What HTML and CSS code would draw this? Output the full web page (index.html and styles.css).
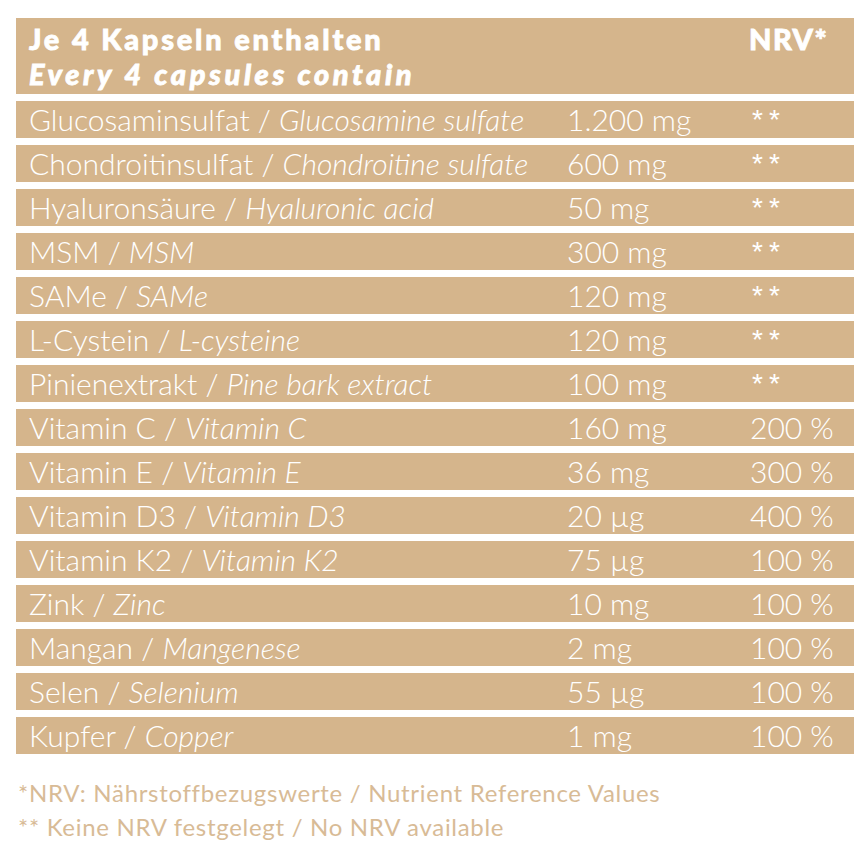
FILE: index.html
```html
<!DOCTYPE html>
<html lang="de">
<head>
<meta charset="utf-8">
<link rel="stylesheet" href="styles.css">
</head>
<body>
<div class="panel">
  <div class="table">
    <div class="head">
      <div class="head-left">
        <div class="h-de">Je 4 Kapseln enthalten</div>
        <div class="h-en">Every 4 capsules contain</div>
      </div>
      <div class="h-nrv">NRV*</div>
    </div>
    <div class="row"><span class="name">Glucosaminsulfat / <em>Glucosamine sulfate</em></span><span class="amt">1.200 mg</span><span class="nrv star">**</span></div>
    <div class="row"><span class="name">Chondroitinsulfat / <em>Chondroitine sulfate</em></span><span class="amt">600 mg</span><span class="nrv star">**</span></div>
    <div class="row"><span class="name">Hyaluronsäure / <em>Hyaluronic acid</em></span><span class="amt">50 mg</span><span class="nrv star">**</span></div>
    <div class="row"><span class="name">MSM / <em>MSM</em></span><span class="amt">300 mg</span><span class="nrv star">**</span></div>
    <div class="row"><span class="name">SAMe / <em>SAMe</em></span><span class="amt">120 mg</span><span class="nrv star">**</span></div>
    <div class="row"><span class="name">L-Cystein / <em>L-cysteine</em></span><span class="amt">120 mg</span><span class="nrv star">**</span></div>
    <div class="row"><span class="name">Pinienextrakt / <em>Pine bark extract</em></span><span class="amt">100 mg</span><span class="nrv star">**</span></div>
    <div class="row"><span class="name">Vitamin C / <em>Vitamin C</em></span><span class="amt">160 mg</span><span class="nrv">200 %</span></div>
    <div class="row"><span class="name">Vitamin E / <em>Vitamin E</em></span><span class="amt">36 mg</span><span class="nrv">300 %</span></div>
    <div class="row"><span class="name">Vitamin D3 / <em>Vitamin D3</em></span><span class="amt">20 µg</span><span class="nrv">400 %</span></div>
    <div class="row"><span class="name">Vitamin K2 / <em>Vitamin K2</em></span><span class="amt">75 µg</span><span class="nrv">100 %</span></div>
    <div class="row"><span class="name">Zink / <em>Zinc</em></span><span class="amt">10 mg</span><span class="nrv">100 %</span></div>
    <div class="row"><span class="name">Mangan / <em>Mangenese</em></span><span class="amt">2 mg</span><span class="nrv">100 %</span></div>
    <div class="row"><span class="name">Selen / <em>Selenium</em></span><span class="amt">55 µg</span><span class="nrv">100 %</span></div>
    <div class="row"><span class="name">Kupfer / <em>Copper</em></span><span class="amt">1 mg</span><span class="nrv">100 %</span></div>
  </div>
  <div class="notes">
    <p>*NRV: Nährstoffbezugswerte / Nutrient Reference Values</p>
    <p>** Keine NRV festgelegt / No NRV available</p>
  </div>
</div>
</body>
</html>
```
FILE: styles.css
```css
html, body {
  margin: 0;
  padding: 0;
  background: #ffffff;
}
.panel {
  padding: 18px 14px 0 16px;
  font-family: "Lato", "Liberation Sans", sans-serif;
}
.table {
  display: flex;
  flex-direction: column;
  gap: 7px;
  width: 838px;
}
.head {
  background: #d5b58c;
  height: 76px;
  box-sizing: border-box;
  padding: 3px 0 0 13px;
  display: flex;
  color: #ffffff;
  font-weight: 900;
  font-size: 29px;
  letter-spacing: 2.8px;
  line-height: 35px;
  -webkit-text-stroke: 0.8px #ffffff;
}
.head-left {
  width: 720px;
}
.h-en {
  font-style: italic;
  letter-spacing: 3.6px;
}
.h-nrv {
  letter-spacing: 1.5px;
}
.row {
  background: #d5b58c;
  height: 37px;
  box-sizing: border-box;
  padding-left: 13px;
  display: grid;
  grid-template-columns: 538px 183px 1fr;
  align-items: center;
  color: #ffffff;
  font-size: 30px;
  font-weight: 300;
  line-height: 37px;
  white-space: nowrap;
}
.row em {
  font-style: italic;
}
.star {
  padding-left: 2px;
  font-family: "Liberation Sans", sans-serif;
  font-size: 28px;
  letter-spacing: 6px;
}
.notes {
  margin-top: 22px;
  padding-left: 2px;
  color: #d8bb96;
  font-size: 24px;
  font-weight: 400;
  letter-spacing: 0.7px;
  line-height: 34px;
}
.notes p {
  margin: 0;
}
```
